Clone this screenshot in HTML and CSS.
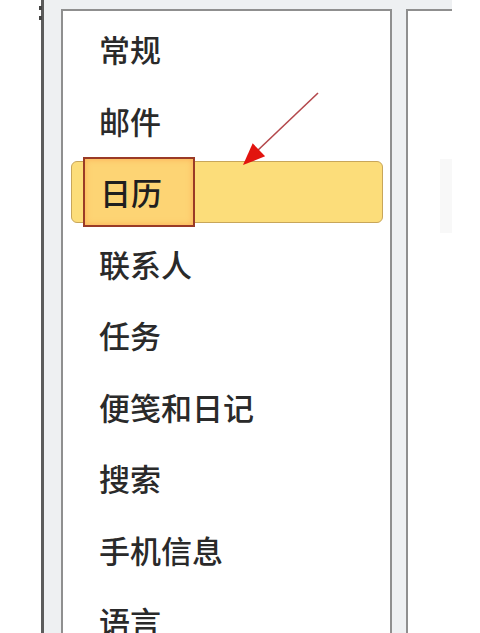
FILE: index.html
```html
<!DOCTYPE html>
<html lang="zh-CN">
<head>
<meta charset="utf-8">
<title>选项</title>
<link rel="stylesheet" href="styles.css">
</head>
<body>
<div class="screen">
  <div class="margin"></div>
  <div class="rule"><span class="tick t1"></span><span class="tick t2"></span></div>
  <div class="frame">
    <div class="panel nav">
      <ul class="menu">
        <li class="item">常规</li>
        <li class="item">邮件</li>
        <li class="item selected">
          <div class="pill"><div class="mark">日历</div></div>
        </li>
        <li class="item">联系人</li>
        <li class="item">任务</li>
        <li class="item">便笺和日记</li>
        <li class="item">搜索</li>
        <li class="item">手机信息</li>
        <li class="item">语言</li>
      </ul>
    </div>
    <div class="panel detail"><div class="ghost"></div></div>
  </div>
  <div class="outside"></div>
  <svg class="arrow" width="480" height="633" viewBox="0 0 480 633">
    <line x1="318" y1="93" x2="256" y2="152" stroke="#b4484c" stroke-width="1.6"/>
    <polygon points="243,165 252.7,143.3 265.1,156.3" fill="#e2140f"/>
  </svg>
</div>
</body>
</html>
```
FILE: styles.css
```css
* { box-sizing: border-box; }
html, body { margin: 0; padding: 0; background: #ffffff; }
body { width: 480px; height: 633px; overflow: hidden; font-family: "Noto Sans CJK SC", "Noto Sans", sans-serif; }

.screen { position: relative; display: flex; width: 480px; height: 633px; overflow: hidden; }

.margin { width: 41px; background: #ffffff; }

.rule { position: relative; width: 3px; background: #5c5c5c; }
.tick { position: absolute; left: -2px; width: 3px; height: 4px; background: #444; }
.t1 { top: 6px; }
.t2 { top: 16px; }

.frame {
  display: flex;
  gap: 14px;
  width: 408px;
  padding: 9px 0 0 17px;
  background: #eef0f2;
}

.panel { background: #ffffff; border-top: 2px solid #8f8f8f; border-left: 2px solid #8f8f8f; }

.nav { width: 331px; border-right: 2px solid #8f8f8f; }
.detail { flex: 1; padding-top: 148px; }
.ghost { margin-left: 32px; width: 12px; height: 74px; background: #f8f8f8; }

.outside { flex: 1; background: #ffffff; }

.menu { list-style: none; margin: 0; padding: 2px 0 0 0; }
.item {
  display: flex;
  align-items: center;
  height: 71.5px;
  padding-left: 36px;
  font-size: 31px;
  font-weight: 500;
  color: #2a2a2a;
}

.item.selected { padding-left: 8px; padding-right: 7px; }
.pill {
  display: flex;
  align-items: center;
  flex: 1;
  height: 62px;
  background: #fcdd7a;
  border: 1px solid #c8a65a;
  border-radius: 6px;
}
.mark {
  display: flex;
  align-items: center;
  flex: none;
  margin-left: 11px;
  width: 112px;
  height: 70px;
  padding-left: 15px;
  border: 2px solid #9a3a26;
  background: #fdd474;
  box-shadow: inset 0 0 6px rgba(255, 140, 60, 0.55);
  color: #1f1f1f;
}

.arrow { position: absolute; left: 0; top: 0; pointer-events: none; }
```
